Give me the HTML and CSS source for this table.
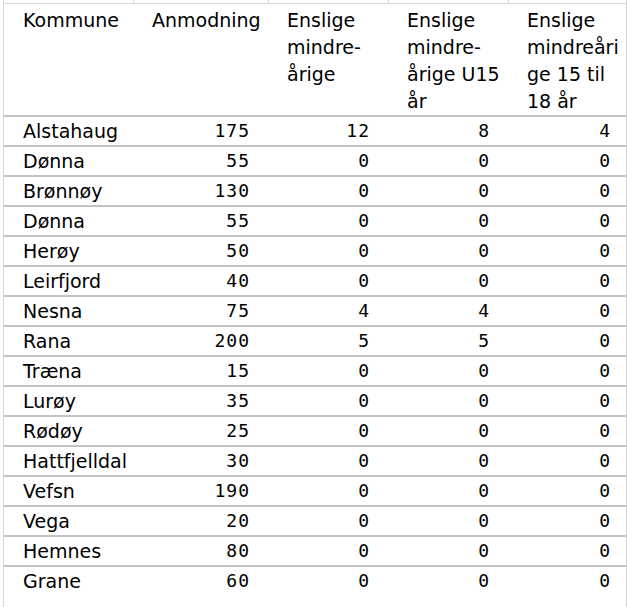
FILE: index.html
```html
<!DOCTYPE html>
<html lang="no">
<head>
<meta charset="utf-8">
<title>Anmodning</title>
<link rel="stylesheet" href="styles.css">
</head>
<body>
<div class="sheet">
  <div class="strip">
    <span></span><span></span><span></span><span></span><span></span>
  </div>
  <table class="grid">
    <colgroup>
      <col class="c1"><col class="c2"><col class="c3"><col class="c4"><col class="c5">
    </colgroup>
    <thead>
      <tr>
        <th class="t">Kommune</th>
        <th class="h">Anmodning</th>
        <th class="h">Enslige<br>mindre-<br>årige</th>
        <th class="h">Enslige<br>mindre-<br>årige U15<br>år</th>
        <th class="h">Enslige<br>mindreåri<br>ge 15 til<br>18 år</th>
      </tr>
    </thead>
    <tbody>
      <tr><td class="t">Alstahaug</td><td class="n">175</td><td class="n">12</td><td class="n">8</td><td class="n last">4</td></tr>
      <tr><td class="t">Dønna</td><td class="n">55</td><td class="n">0</td><td class="n">0</td><td class="n last">0</td></tr>
      <tr><td class="t">Brønnøy</td><td class="n">130</td><td class="n">0</td><td class="n">0</td><td class="n last">0</td></tr>
      <tr><td class="t">Dønna</td><td class="n">55</td><td class="n">0</td><td class="n">0</td><td class="n last">0</td></tr>
      <tr><td class="t">Herøy</td><td class="n">50</td><td class="n">0</td><td class="n">0</td><td class="n last">0</td></tr>
      <tr><td class="t">Leirfjord</td><td class="n">40</td><td class="n">0</td><td class="n">0</td><td class="n last">0</td></tr>
      <tr><td class="t">Nesna</td><td class="n">75</td><td class="n">4</td><td class="n">4</td><td class="n last">0</td></tr>
      <tr><td class="t">Rana</td><td class="n">200</td><td class="n">5</td><td class="n">5</td><td class="n last">0</td></tr>
      <tr><td class="t">Træna</td><td class="n">15</td><td class="n">0</td><td class="n">0</td><td class="n last">0</td></tr>
      <tr><td class="t">Lurøy</td><td class="n">35</td><td class="n">0</td><td class="n">0</td><td class="n last">0</td></tr>
      <tr><td class="t">Rødøy</td><td class="n">25</td><td class="n">0</td><td class="n">0</td><td class="n last">0</td></tr>
      <tr><td class="t">Hattfjelldal</td><td class="n">30</td><td class="n">0</td><td class="n">0</td><td class="n last">0</td></tr>
      <tr><td class="t">Vefsn</td><td class="n">190</td><td class="n">0</td><td class="n">0</td><td class="n last">0</td></tr>
      <tr><td class="t">Vega</td><td class="n">20</td><td class="n">0</td><td class="n">0</td><td class="n last">0</td></tr>
      <tr><td class="t">Hemnes</td><td class="n">80</td><td class="n">0</td><td class="n">0</td><td class="n last">0</td></tr>
      <tr><td class="t">Grane</td><td class="n">60</td><td class="n">0</td><td class="n">0</td><td class="n last">0</td></tr>
    </tbody>
  </table>
</div>
</body>
</html>
```
FILE: styles.css
```css
html, body {
  margin: 0;
  padding: 0;
  background: #ffffff;
}

body {
  font-family: "DejaVu Sans", Verdana, sans-serif;
  color: #000000;
}

.sheet {
  margin-left: 3px;
  width: 622px;
  min-height: 607px;
  border-left: 1px solid #d6d6d6;
  border-right: 1px solid #d6d6d6;
}

.strip {
  display: grid;
  grid-template-columns: 129px 135px 120px 120px 118px;
  height: 3px;
}

.strip span + span {
  border-left: 1px solid #d6d6d6;
}

.grid {
  border-collapse: separate;
  border-spacing: 0;
  table-layout: fixed;
  width: 622px;
  border-top: 1px solid #d6d6d6;
}

.c1 { width: 129px; }
.c2 { width: 135px; }
.c3 { width: 120px; }
.c4 { width: 120px; }
.c5 { width: 118px; }

th {
  font-weight: normal;
  text-align: left;
  vertical-align: top;
  font-size: 19px;
  line-height: 27px;
  padding: 3px 0 0 19px;
  white-space: nowrap;
  border-bottom: 2px solid #c4c4c4;
}

td {
  height: 28px;
  padding: 0;
  border-bottom: 2px solid #c4c4c4;
  white-space: nowrap;
}

tbody tr:last-child td {
  border-bottom: none;
}

td.t {
  font-size: 19px;
  line-height: 28px;
  padding-left: 19px;
}

td.n {
  font-family: "DejaVu Sans Mono", "Liberation Mono", monospace;
  font-size: 18px;
  letter-spacing: 1px;
  line-height: 28px;
  text-align: right;
  padding-right: 18px;
}

td.n.last {
  padding-right: 15px;
}
```
